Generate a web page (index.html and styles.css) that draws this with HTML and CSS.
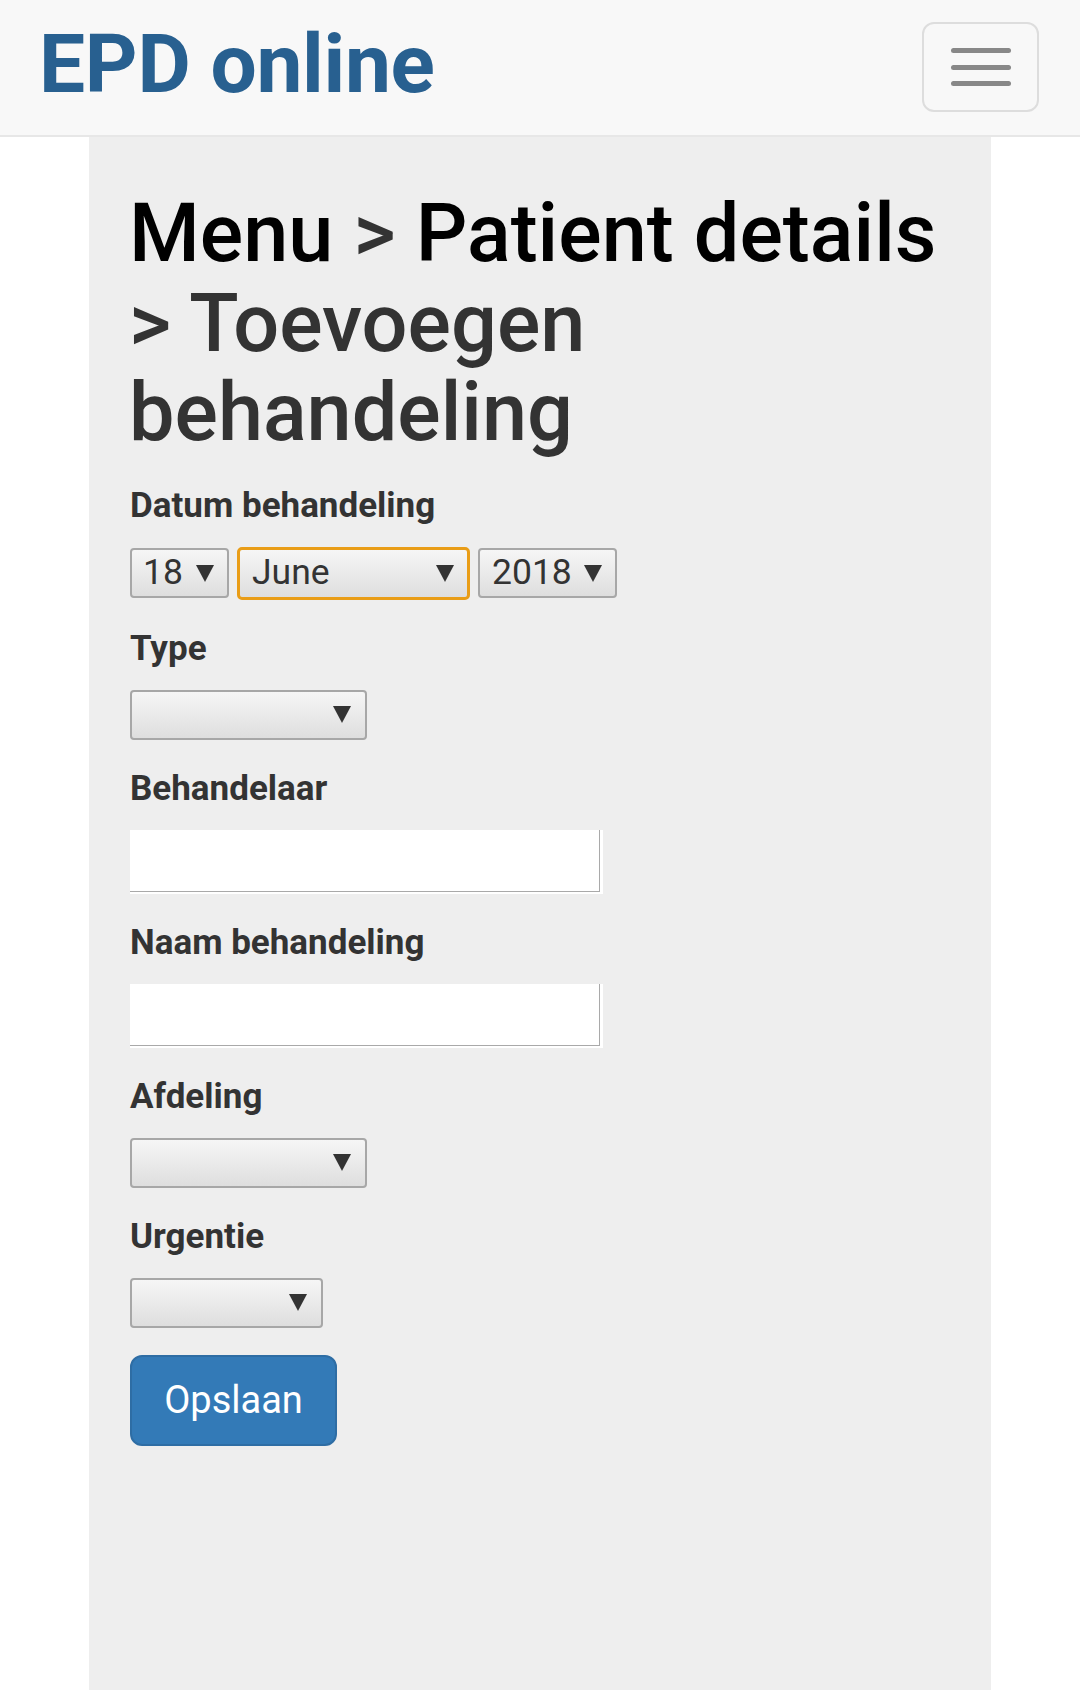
FILE: index.html
```html
<!DOCTYPE html>
<html lang="nl">
<head>
<meta charset="utf-8">
<title>EPD online</title>
<link rel="stylesheet" href="styles.css">
</head>
<body>
<header class="navbar">
  <a class="brand" href="#">EPD online</a>
  <button class="toggle" type="button" aria-label="Menu">
    <span class="bar"></span>
    <span class="bar"></span>
    <span class="bar"></span>
  </button>
</header>
<main class="container">
  <h1 class="title"><a href="#" class="crumb">Menu</a> &gt; <a href="#" class="crumb">Patient details</a> &gt; Toevoegen behandeling</h1>
  <form class="form">
    <div class="group">
      <label class="label">Datum behandeling</label>
      <div class="date-row">
        <div class="select sel-day"><span class="val">18</span><svg class="arrow" viewBox="0 0 18 17"><polygon points="0,0 18,0 9,17"/></svg></div>
        <div class="select sel-month focused"><span class="val">June</span><svg class="arrow" viewBox="0 0 18 17"><polygon points="0,0 18,0 9,17"/></svg></div>
        <div class="select sel-year"><span class="val">2018</span><svg class="arrow" viewBox="0 0 18 17"><polygon points="0,0 18,0 9,17"/></svg></div>
      </div>
    </div>
    <div class="group">
      <label class="label">Type</label>
      <div class="select sel-wide"><span class="val"></span><svg class="arrow" viewBox="0 0 18 17"><polygon points="0,0 18,0 9,17"/></svg></div>
    </div>
    <div class="group">
      <label class="label">Behandelaar</label>
      <input class="text-input" type="text">
    </div>
    <div class="group">
      <label class="label">Naam behandeling</label>
      <input class="text-input" type="text">
    </div>
    <div class="group">
      <label class="label">Afdeling</label>
      <div class="select sel-wide"><span class="val"></span><svg class="arrow" viewBox="0 0 18 17"><polygon points="0,0 18,0 9,17"/></svg></div>
    </div>
    <div class="group">
      <label class="label">Urgentie</label>
      <div class="select sel-mid"><span class="val"></span><svg class="arrow" viewBox="0 0 18 17"><polygon points="0,0 18,0 9,17"/></svg></div>
    </div>
    <button class="btn" type="button">Opslaan</button>
  </form>
</main>
</body>
</html>
```
FILE: styles.css
```css
* { box-sizing: border-box; }
html, body { margin: 0; padding: 0; }
body {
  background: #ffffff;
  font-family: Roboto, "Liberation Sans", sans-serif;
  color: #333333;
  font-size: 31.5px;
  line-height: 45px;
}

.navbar {
  height: 137px;
  background: #f8f8f8;
  border-bottom: 2px solid #e7e7e7;
  display: flex;
  justify-content: space-between;
  align-items: flex-start;
  padding: 0 41px 0 39px;
}
.brand {
  margin-top: 23px;
  font-size: 82px;
  line-height: 82px;
  font-weight: 700;
  color: #286090;
  text-decoration: none;
  letter-spacing: -0.3px;
}
.toggle {
  margin-top: 22px;
  width: 117px;
  height: 90px;
  border: 2px solid #dddddd;
  border-radius: 12px;
  background: transparent;
  display: flex;
  flex-direction: column;
  align-items: center;
  justify-content: center;
  gap: 11.5px;
  padding: 0;
}
.bar {
  display: block;
  width: 60px;
  height: 5px;
  border-radius: 3px;
  background: #888888;
}

.container {
  width: 902px;
  margin: 0 auto;
  min-height: 1553px;
  background: #eeeeee;
  padding: 1px 41px 0 41px;
}
.title {
  margin: 51px 0 26px -1px;
  font-size: 81px;
  line-height: 89.5px;
  font-weight: 500;
  color: #333333;
}
.crumb {
  color: #000000;
  text-decoration: none;
}

.group {
  margin-bottom: 27px;
}
.label {
  display: block;
  font-size: 35px;
  line-height: 45px;
  font-weight: 700;
  margin: -1px 0 19px 0;
}

.date-row {
  display: flex;
  align-items: center;
  gap: 8px;
}
.select {
  height: 50px;
  display: flex;
  align-items: center;
  justify-content: space-between;
  padding: 0 13px 0 13px;
  border: 2px solid #a7a7a7;
  border-radius: 4px;
  background: linear-gradient(#f6f6f6, #dedede);
  font-size: 35.5px;
  color: #333333;
  line-height: 1;
}
.arrow {
  width: 18px;
  height: 17px;
  fill: #333333;
  flex: none;
}
.sel-day { width: 99px; padding-left: 11px; }
.sel-month { width: 233px; }
.sel-year { width: 139px; padding-left: 12px; }
.sel-wide { width: 237px; padding-right: 14px; }
.sel-mid { width: 193px; padding-right: 14px; }
.focused {
  height: 53px;
  border: 3px solid #e99d17;
  border-radius: 5px;
  padding: 0 13px 0 12px;
}

.text-input {
  display: block;
  width: 473px;
  height: 64px;
  margin: 0;
  border: 0;
  border-radius: 0;
  background: #ffffff;
  box-shadow: inset -3px -2px 0 #ffffff, inset -4px -3px 0 #a9a9a9;
  font-family: inherit;
  font-size: 34px;
  padding: 0 12px;
}

.btn {
  display: block;
  margin-top: 3px;
  width: 207px;
  height: 91px;
  background: #337ab7;
  border: 2px solid #2e6da4;
  border-radius: 12px;
  color: #ffffff;
  font-family: inherit;
  font-size: 38px;
  font-weight: 400;
  padding: 0;
}
```
